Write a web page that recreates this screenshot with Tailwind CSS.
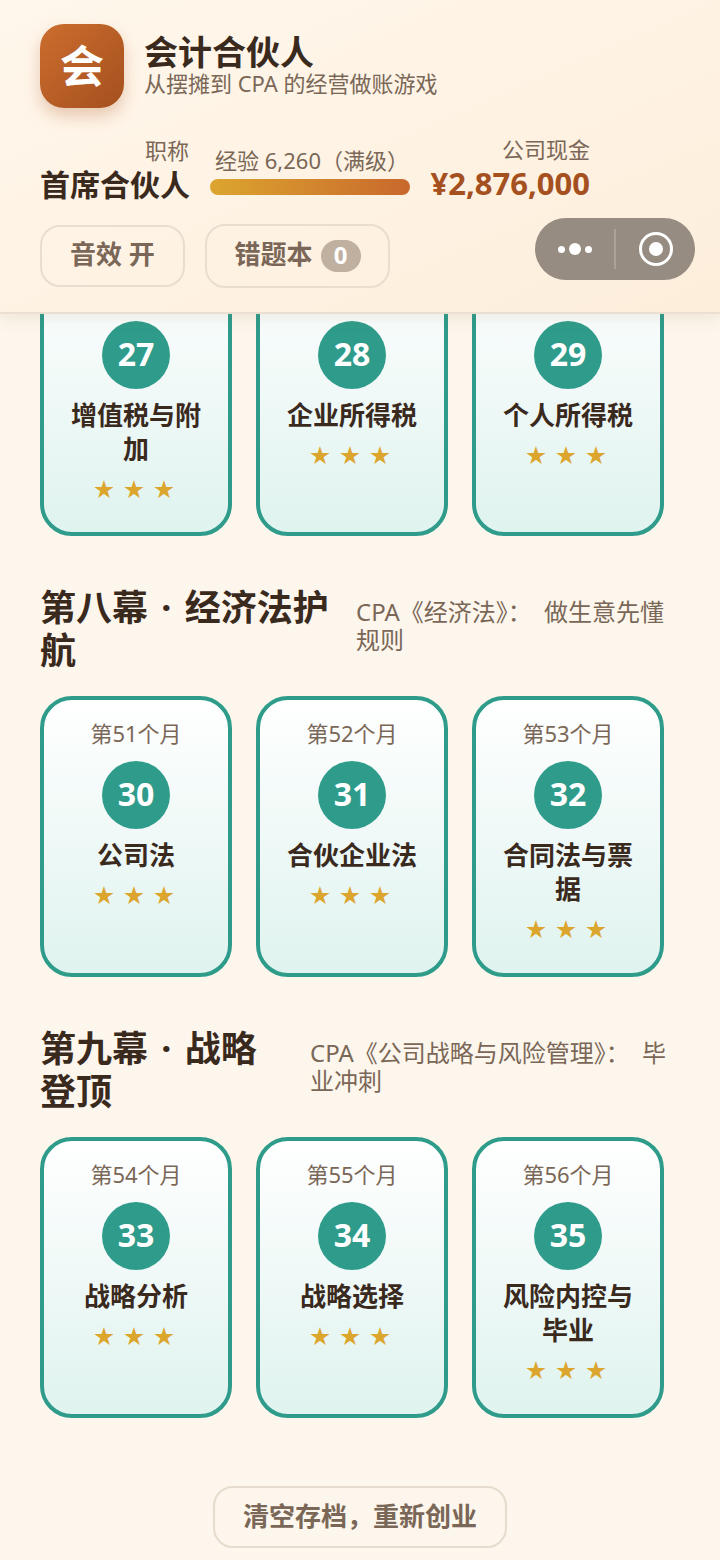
<!doctype html>
<html lang="zh-CN">
<head>
<meta charset="utf-8">
<script src="https://cdn.jsdelivr.net/npm/@tailwindcss/browser@4"></script>
</head>
<body class="m-0">
<div class="relative w-[720px] h-[1560px] overflow-hidden bg-[#fdf6ec] text-[#3a2a1e] font-['Noto_Sans','Noto_Sans_CJK_SC',sans-serif]">
  <header class="relative z-10 h-[314px] px-10 pt-6 bg-gradient-to-br from-[#fff7ec] to-[#fdeedb] border-b-2 border-[#eadfd0] shadow-[0_4px_16px_rgba(120,80,40,0.10)]">
    <div class="flex items-center gap-5">
      <div class="w-[84px] h-[84px] rounded-[24px] bg-gradient-to-br from-[#cc6d2e] to-[#a5501f] shadow-[0_8px_16px_rgba(168,82,31,0.28)] flex items-center justify-center text-white text-[44px] font-bold leading-none">会</div>
      <div>
        <div class="text-[34px] leading-[34px] font-bold">会计合伙人</div>
        <div class="text-[22px] leading-[28px] text-[#7a6757]">从摆摊到 CPA 的经营做账游戏</div>
      </div>
    </div>
    <div class="flex mt-[24px] items-start">
      <div class="w-[149px] text-right">
        <div class="text-[22px] leading-[36px] text-[#7a6757]">职称</div>
        <div class="text-[30px] leading-[34px] font-bold whitespace-nowrap">首席合伙人</div>
      </div>
      <div class="w-[200px] ml-[21px] mt-[11px]">
        <div class="pl-1 text-[22px] leading-[34px] text-[#7a6757] text-center whitespace-nowrap">经验 6,260（满级）</div>
        <div class="h-4 mt-[2px] rounded-full bg-gradient-to-r from-[#dca52e] to-[#c8682c]"></div>
      </div>
      <div class="w-[180px] text-right">
        <div class="text-[22px] leading-[34px] text-[#7a6757]">公司现金</div>
        <div class="text-[31px] leading-[35px] font-bold text-[#a5501f] whitespace-nowrap">¥2,876,000</div>
      </div>
    </div>
    <div class="flex items-center gap-5 mt-[22px]">
      <div class="w-[145px] h-[62px] pb-[3px] rounded-[20px] border-2 border-[#e8ddcf] flex items-center justify-center text-[26px] font-bold text-[#7a6757]">音效 开</div>
      <div class="w-[185px] h-[64px] rounded-[20px] border-2 border-[#e8ddcf] flex items-center justify-center gap-2 text-[26px] font-bold text-[#7a6757]"><span class="mb-[3px]">错题本</span>
        <span class="w-10 h-8 rounded-full bg-[#bfb0a0] text-white text-[24px] leading-[30px] text-center">0</span>
      </div>
    </div>
    <div class="absolute left-[535px] top-[218px] w-[160px] h-[62px] rounded-full bg-[#968c81] flex items-center">
      <div class="w-[79px] flex items-center justify-center gap-[4px]">
        <span class="w-[7px] h-[7px] rounded-full bg-white"></span>
        <span class="w-3 h-3 rounded-full bg-white"></span>
        <span class="w-[7px] h-[7px] rounded-full bg-white"></span>
      </div>
      <div class="w-[2px] h-10 bg-white/20"></div>
      <div class="flex-1 flex items-center justify-center">
        <div class="w-[34px] h-[34px] rounded-full border-[3px] border-white flex items-center justify-center"><span class="w-[14px] h-[14px] rounded-full bg-white"></span></div>
      </div>
    </div>
  </header>

  <main class="-mt-[58px] pl-10 pr-[56px]">
    <div class="grid grid-cols-[repeat(3,192px)] gap-6">
      <div class="h-[280px] rounded-[32px] border-4 border-[#2f9c8b] bg-gradient-to-b from-white to-[#dff3ef] pt-[61px] flex flex-col items-center">
        <div class="w-[68px] h-[68px] pb-[2px] rounded-full bg-[#2f9c8b] text-white text-[32px] font-bold flex items-center justify-center">27</div>
        <div class="w-[140px] mt-[9px] text-[26px] leading-[34px] font-bold text-center">增值税与附加</div>
        <div class="mt-[9px] h-[30px] text-[20px] leading-[30px] tracking-[10px] pl-[6px] text-[#dca52e]">★★★</div>
      </div>
      <div class="h-[280px] rounded-[32px] border-4 border-[#2f9c8b] bg-gradient-to-b from-white to-[#dff3ef] pt-[61px] flex flex-col items-center">
        <div class="w-[68px] h-[68px] pb-[2px] rounded-full bg-[#2f9c8b] text-white text-[32px] font-bold flex items-center justify-center">28</div>
        <div class="w-[140px] mt-[9px] text-[26px] leading-[34px] font-bold text-center">企业所得税</div>
        <div class="mt-[9px] h-[30px] text-[20px] leading-[30px] tracking-[10px] pl-[6px] text-[#dca52e]">★★★</div>
      </div>
      <div class="h-[280px] rounded-[32px] border-4 border-[#2f9c8b] bg-gradient-to-b from-white to-[#dff3ef] pt-[61px] flex flex-col items-center">
        <div class="w-[68px] h-[68px] pb-[2px] rounded-full bg-[#2f9c8b] text-white text-[32px] font-bold flex items-center justify-center">29</div>
        <div class="w-[140px] mt-[9px] text-[26px] leading-[34px] font-bold text-center">个人所得税</div>
        <div class="mt-[9px] h-[30px] text-[20px] leading-[30px] tracking-[10px] pl-[6px] text-[#dca52e]">★★★</div>
      </div>
    </div>

    <section class="mt-[50px]">
      <div class="flex items-baseline gap-5">
        <h2 class="w-[296px] shrink-0 text-[36px] leading-[43px] font-bold [word-spacing:4px]">第八幕 · 经济法护航</h2>
        <p class="flex-1 -mr-1 text-[24px] leading-[28px] text-[#7a6757] [word-spacing:6px]">CPA《经济法》： 做生意先懂规则</p>
      </div>
      <div class="grid grid-cols-[repeat(3,192px)] gap-6 mt-6">
        <div class="h-[281px] rounded-[32px] border-4 border-[#2f9c8b] bg-gradient-to-b from-white to-[#dff3ef] pt-[19px] flex flex-col items-center">
          <div class="text-[22px] leading-7 text-[#7a6757]">第51个月</div>
          <div class="mt-[14px] w-[68px] h-[68px] pb-[2px] rounded-full bg-[#2f9c8b] text-white text-[32px] font-bold flex items-center justify-center">30</div>
          <div class="w-[140px] mt-[9px] text-[26px] leading-[34px] font-bold text-center">公司法</div>
          <div class="mt-[9px] h-[30px] text-[20px] leading-[30px] tracking-[10px] pl-[6px] text-[#dca52e]">★★★</div>
        </div>
        <div class="h-[281px] rounded-[32px] border-4 border-[#2f9c8b] bg-gradient-to-b from-white to-[#dff3ef] pt-[19px] flex flex-col items-center">
          <div class="text-[22px] leading-7 text-[#7a6757]">第52个月</div>
          <div class="mt-[14px] w-[68px] h-[68px] pb-[2px] rounded-full bg-[#2f9c8b] text-white text-[32px] font-bold flex items-center justify-center">31</div>
          <div class="w-[140px] mt-[9px] text-[26px] leading-[34px] font-bold text-center">合伙企业法</div>
          <div class="mt-[9px] h-[30px] text-[20px] leading-[30px] tracking-[10px] pl-[6px] text-[#dca52e]">★★★</div>
        </div>
        <div class="h-[281px] rounded-[32px] border-4 border-[#2f9c8b] bg-gradient-to-b from-white to-[#dff3ef] pt-[19px] flex flex-col items-center">
          <div class="text-[22px] leading-7 text-[#7a6757]">第53个月</div>
          <div class="mt-[14px] w-[68px] h-[68px] pb-[2px] rounded-full bg-[#2f9c8b] text-white text-[32px] font-bold flex items-center justify-center">32</div>
          <div class="w-[140px] mt-[9px] text-[26px] leading-[34px] font-bold text-center">合同法与票据</div>
          <div class="mt-[9px] h-[30px] text-[20px] leading-[30px] tracking-[10px] pl-[6px] text-[#dca52e]">★★★</div>
        </div>
      </div>
    </section>

    <section class="mt-[50px]">
      <div class="flex items-baseline gap-5">
        <h2 class="w-[250px] shrink-0 text-[36px] leading-[43px] font-bold [word-spacing:4px]">第九幕 · 战略登顶</h2>
        <p class="flex-1 -mr-1 text-[24px] leading-[28px] text-[#7a6757] [word-spacing:6px]">CPA《公司战略与风险管理》： 毕业冲刺</p>
      </div>
      <div class="grid grid-cols-[repeat(3,192px)] gap-6 mt-6">
        <div class="h-[281px] rounded-[32px] border-4 border-[#2f9c8b] bg-gradient-to-b from-white to-[#dff3ef] pt-[19px] flex flex-col items-center">
          <div class="text-[22px] leading-7 text-[#7a6757]">第54个月</div>
          <div class="mt-[14px] w-[68px] h-[68px] pb-[2px] rounded-full bg-[#2f9c8b] text-white text-[32px] font-bold flex items-center justify-center">33</div>
          <div class="w-[140px] mt-[9px] text-[26px] leading-[34px] font-bold text-center">战略分析</div>
          <div class="mt-[9px] h-[30px] text-[20px] leading-[30px] tracking-[10px] pl-[6px] text-[#dca52e]">★★★</div>
        </div>
        <div class="h-[281px] rounded-[32px] border-4 border-[#2f9c8b] bg-gradient-to-b from-white to-[#dff3ef] pt-[19px] flex flex-col items-center">
          <div class="text-[22px] leading-7 text-[#7a6757]">第55个月</div>
          <div class="mt-[14px] w-[68px] h-[68px] pb-[2px] rounded-full bg-[#2f9c8b] text-white text-[32px] font-bold flex items-center justify-center">34</div>
          <div class="w-[140px] mt-[9px] text-[26px] leading-[34px] font-bold text-center">战略选择</div>
          <div class="mt-[9px] h-[30px] text-[20px] leading-[30px] tracking-[10px] pl-[6px] text-[#dca52e]">★★★</div>
        </div>
        <div class="h-[281px] rounded-[32px] border-4 border-[#2f9c8b] bg-gradient-to-b from-white to-[#dff3ef] pt-[19px] flex flex-col items-center">
          <div class="text-[22px] leading-7 text-[#7a6757]">第56个月</div>
          <div class="mt-[14px] w-[68px] h-[68px] pb-[2px] rounded-full bg-[#2f9c8b] text-white text-[32px] font-bold flex items-center justify-center">35</div>
          <div class="w-[140px] mt-[9px] text-[26px] leading-[34px] font-bold text-center">风险内控与毕业</div>
          <div class="mt-[9px] h-[30px] text-[20px] leading-[30px] tracking-[10px] pl-[6px] text-[#dca52e]">★★★</div>
        </div>
      </div>
    </section>
  </main>
  <div class="flex justify-center mt-[68px]">
    <div class="w-[294px] h-[62px] pb-[2px] rounded-[20px] border-2 border-[#e6dccd] flex items-center justify-center text-[26px] font-bold text-[#7a6757]">清空存档，重新创业</div>
  </div>
</div>
</body>
</html>
